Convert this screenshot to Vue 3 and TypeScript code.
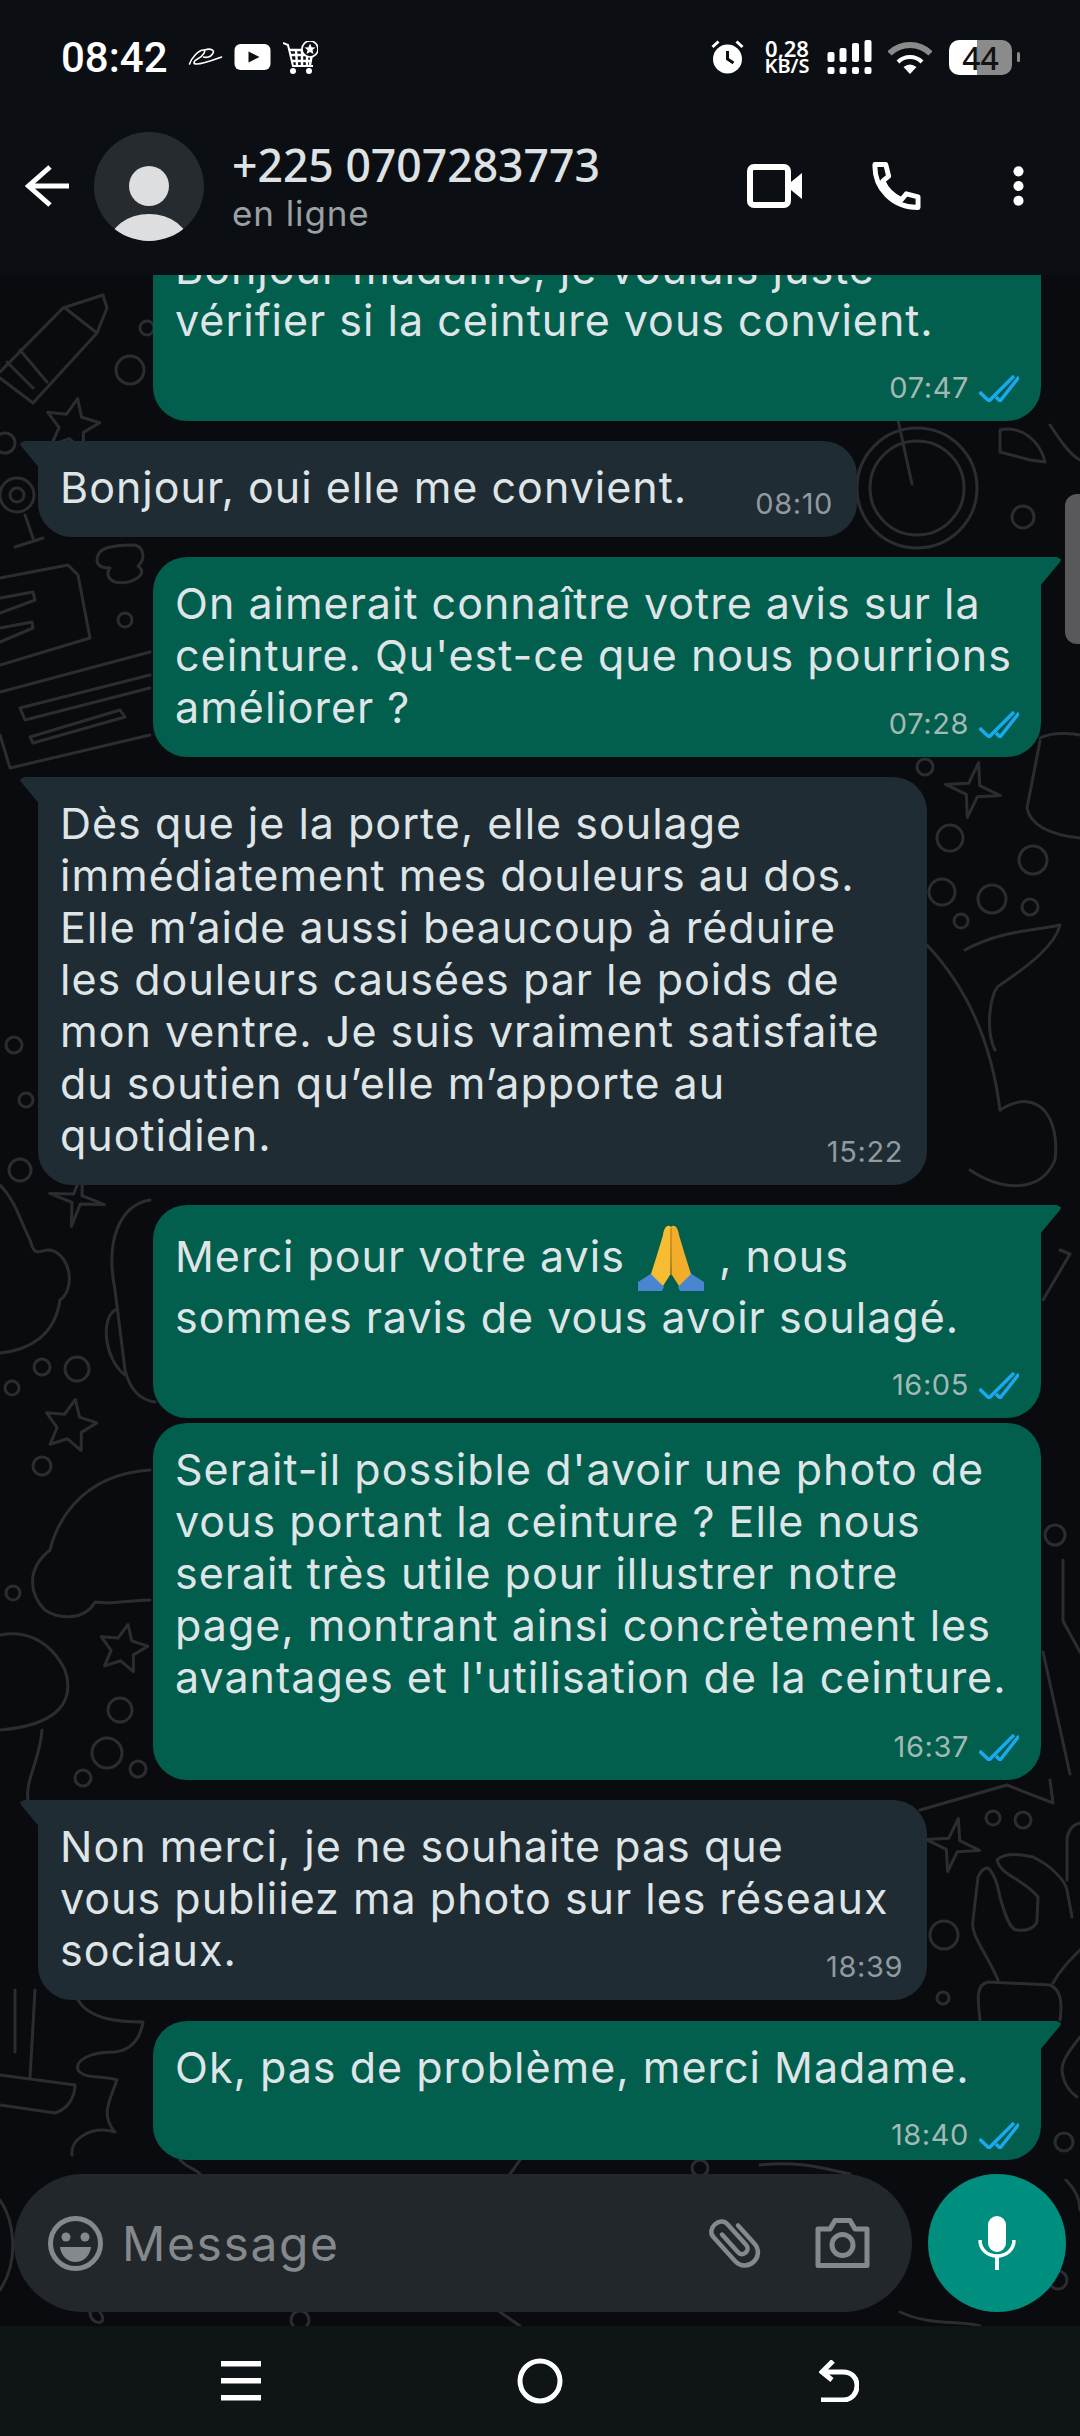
<script setup lang="ts">
interface Message {
  side: 'sent' | 'received'
  lines: string[]
  time: string
  footer?: boolean
  ticks?: boolean
  tail?: boolean
  short?: boolean
  clipped?: boolean
  close?: boolean
}

const messages: Message[] = [
  { side: 'sent', lines: ['Bonjour madame, je voulais juste', 'vérifier si la ceinture vous convient.'], time: '07:47', footer: true, ticks: true, tail: true },
  { side: 'received', lines: ['Bonjour, oui elle me convient.'], time: '08:10', tail: true, short: true },
  { side: 'sent', lines: ['On aimerait connaître votre avis sur la', "ceinture. Qu'est-ce que nous pourrions", 'améliorer ?'], time: '07:28', ticks: true, tail: true },
  { side: 'received', lines: ['Dès que je la porte, elle soulage', 'immédiatement mes douleurs au dos.', 'Elle m’aide aussi beaucoup à réduire', 'les douleurs causées par le poids de', 'mon ventre. Je suis vraiment satisfaite', 'du soutien qu’elle m’apporte au', 'quotidien.'], time: '15:22', tail: true },
  { side: 'sent', lines: ['Merci pour votre avis |, nous', 'sommes ravis de vous avoir soulagé.'], time: '16:05', footer: true, ticks: true, tail: true },
  { side: 'sent', lines: ["Serait-il possible d'avoir une photo de", 'vous portant la ceinture ? Elle nous', 'serait très utile pour illustrer notre', 'page, montrant ainsi concrètement les', "avantages et l'utilisation de la ceinture."], time: '16:37', footer: true, ticks: true, close: true },
  { side: 'received', lines: ['Non merci, je ne souhaite pas que', 'vous publiiez ma photo sur les réseaux', 'sociaux.'], time: '18:39', tail: true },
  { side: 'sent', lines: ['Ok, pas de problème, merci Madame.'], time: '18:40', footer: true, ticks: true, tail: true, clipped: true },
]

const rings: [number, number, number][] = [
  [130, 370, 14], [147, 328, 7], [125, 620, 7], [5, 443, 10], [17, 495, 17], [17, 495, 7],
  [917, 488, 60], [917, 488, 47], [1023, 517, 11], [950, 838, 13], [942, 892, 13], [992, 899, 14],
  [1033, 860, 14], [1030, 907, 8], [961, 921, 7], [925, 767, 8], [42, 1367, 8], [77, 1369, 12], [12, 1388, 7],
  [42, 1466, 9], [13, 1593, 7], [120, 1710, 12], [107, 1753, 15], [83, 1778, 8], [138, 1769, 8],
  [20, 1170, 11], [14, 1045, 8], [26, 1100, 7], [1055, 1535, 10],
  [993, 1818, 7], [1023, 1820, 8], [944, 1935, 14], [943, 1998, 6], [1064, 2142, 9], [700, 2168, 8], [300, 2320, 9], [1058, 2280, 9],
]

function star(cx: number, cy: number, r: number, inner: number, n: number): string {
  const pts: string[] = []
  for (let i = 0; i < n * 2; i++) {
    const rad = i % 2 === 0 ? r : inner
    const a = (Math.PI * i) / n - Math.PI / 2 + 0.2
    pts.push(`${(cx + rad * Math.cos(a)).toFixed(1)},${(cy + rad * Math.sin(a)).toFixed(1)}`)
  }
  return pts.join(' ')
}

const stars = [star(70, 1426, 27, 13, 5), star(123, 1649, 25, 12, 5), star(973, 790, 28, 8, 4), star(77, 1199, 28, 6, 4), star(72, 426, 28, 13, 5), star(953, 1845, 27, 8, 4)]

const doodles = [
  'M0 372 L63 308 L103 295 L107 308 L97 333 L33 403 L0 378 M65 308 L97 333 M7 362 L33 388 M20 350 L47 382',
  'M25 515 L33 538 M15 547 L43 538 M97 560 C97 548 110 545 135 545 C145 548 145 560 138 566 C150 575 130 585 115 582 C105 578 108 570 110 568 C100 568 97 565 97 560',
  'M0 578 L68 565 L78 575 L90 638 L0 665 M0 598 L33 592 L35 600 L0 613 M0 628 L32 622 L33 628 L0 642',
  'M0 692 L150 652 M0 735 L10 768 L150 735 M150 675 L20 708 L25 720 L150 688 M30 737 L120 710 L125 717 L33 743 L30 737',
  'M898 420 L912 484 M1000 430 C1020 425 1040 440 1045 462 L1030 460 L1000 452 Z M1050 425 C1060 440 1070 455 1080 460',
  'M1040 738 C1055 730 1080 735 1080 735 M1040 741 L1027 808 C1030 825 1050 835 1080 838',
  'M927 945 C960 980 990 1030 1000 1110 M965 950 C1000 930 1040 930 1060 925 C1055 945 1030 965 1000 985 C990 990 985 1030 995 1050',
  'M1000 1110 C1040 1085 1060 1120 1055 1160 C1040 1195 1000 1190 970 1170',
  'M0 1353 C30 1350 55 1335 60 1300 C75 1290 72 1255 50 1250 C38 1250 35 1258 30 1240 C20 1220 15 1200 0 1185',
  'M150 1200 C120 1205 105 1240 115 1290 L125 1370 C130 1390 140 1400 155 1402 M115 1310 C100 1320 105 1360 125 1375',
  'M150 1600 C130 1600 110 1605 95 1602 C85 1620 60 1620 45 1610 C30 1595 25 1570 50 1550 C55 1530 75 1475 150 1470',
  'M0 1635 C25 1630 50 1640 65 1670 C75 1700 60 1725 0 1730 M42 1730 C40 1760 25 1780 28 1800',
  'M15 1990 L15 2052 M35 1990 L30 2078 M0 2075 L75 2085 C75 2100 65 2110 55 2113 L0 2105',
  'M78 2000 C90 2020 120 2022 143 2022 C140 2040 130 2050 115 2052 C90 2052 75 2060 78 2070 C85 2080 105 2075 117 2080 C110 2100 100 2115 115 2132 C90 2125 70 2140 72 2155',
  'M1043 1300 L1070 1254 L1060 1250 M1043 1652 L1070 1774 M1063 1560 L1063 1621 L1080 1652',
  'M920 1810 L1007 1785 L1053 1803 L1050 1780',
  'M998 1980 C985 1950 970 1935 973 1920 L978 1877 C982 1868 988 1866 990 1870 C998 1880 998 1890 1000 1897 C1005 1915 1010 1930 1017 1930 C1030 1932 1037 1925 1037 1920 L1038 1897 C1025 1880 1000 1875 997 1860 C1005 1852 1020 1854 1033 1857 C1050 1865 1065 1880 1067 1890 L1072 1917',
  'M1053 1983 C1060 1970 1070 1960 1080 1950 M988 1982 C975 1985 978 2000 980 2020 M988 1982 L1050 1985 C1062 1990 1062 2005 1060 2020',
  'M1080 1823 C1070 1825 1067 1835 1067 1840 L1067 1880 M1080 2037 C1070 2050 1062 2060 1062 2070 C1063 2085 1070 2092 1077 2097',
  'M180 2160 C190 2170 195 2168 200 2174 M520 2160 L510 2174 M760 2165 C800 2160 830 2170 850 2174 M100 2312 C110 2326 90 2326 90 2312 M500 2312 L520 2326 M900 2312 C930 2326 960 2320 980 2326',
  'M0 2200 C14 2220 20 2260 0 2290 M1066 2180 C1076 2190 1080 2200 1080 2210',
]
</script>

<template>
  <div class="phone">
    <header class="top">
      <div class="status">
        <span class="clock">08:42</span>
        <svg class="ic-sig" width="35" height="20" viewBox="0 0 34 20" fill="none" stroke="#fff" stroke-width="1.6" stroke-linecap="round">
          <path d="M1 17 C3 11 10 3 15 3 C18 3 15 9 9 12 C5 14 4 17 8 17 C14 17 22 14 33 10" />
          <path d="M16 3 C22 1 27 3 24 7 C22 10 18 11 15 10" />
        </svg>
        <svg class="ic-yt" width="37" height="26" viewBox="0 0 36 26">
          <rect width="36" height="26" rx="6" fill="#fff" />
          <path d="M14 7.5 L25 13 L14 18.5 Z" fill="#0b0f13" />
        </svg>
        <svg class="ic-cart" width="35" height="33" viewBox="0 0 35 33" fill="none" stroke="#fff" stroke-width="2">
          <path d="M0 2 L5 4 L10 25 H30" />
          <path d="M6 9 H24 M7.5 14 H28 M9 20 H28 M13 9 L14 24 M19 9 V24 M24 12 V24 M29 13 L27 24" stroke-width="2.4" />
          <circle cx="10" cy="30" r="3" fill="#fff" stroke="none" />
          <circle cx="26" cy="30" r="3" fill="#fff" stroke="none" />
          <circle cx="27" cy="8" r="8" fill="#0b0f13" stroke="#fff" stroke-width="1.6" />
          <path d="M27 2.5 L28.6 6.2 L32.5 6.5 L29.5 9 L30.5 13 L27 11 L23.5 13 L24.5 9 L21.5 6.5 L25.4 6.2 Z" fill="#fff" stroke="none" />
        </svg>
        <div class="status-right">
          <svg width="33" height="34" viewBox="0 0 32 34" fill="none">
            <circle cx="16" cy="19" r="14.5" fill="#fff" />
            <path d="M16 11 V19 L22 23" stroke="#0b0f13" stroke-width="3" />
            <path d="M1 7 L7 1.5 M31 7 L25 1.5" stroke="#fff" stroke-width="3" />
          </svg>
          <div class="speed"><span>0,28</span><span>KB/S</span></div>
          <svg class="sig" width="45" height="34" viewBox="0 0 44 34" fill="#fff">
            <rect x="0" y="12" width="7" height="10" rx="2" /><rect x="12" y="8" width="7" height="14" rx="2" />
            <rect x="24.5" y="3" width="7" height="19" rx="2" /><rect x="37" y="0" width="7" height="22" rx="2" />
            <rect x="0" y="27" width="7" height="7" rx="2" /><rect x="12" y="27" width="7" height="7" rx="2" />
            <rect x="24.5" y="27" width="7" height="7" rx="2" /><rect x="37" y="27" width="7" height="7" rx="2" />
          </svg>
          <svg class="wifi" width="44" height="35" viewBox="0 0 43 35" fill="none">
            <path d="M1 13.5 A29 29 0 0 1 42 13.5" stroke="#8a8a8a" stroke-width="6" />
            <path d="M9.5 22 A17 17 0 0 1 33.5 22" stroke="#fff" stroke-width="4" />
            <path d="M15 27 Q21.5 22 28 27 L21.5 34 Z" fill="#fff" />
          </svg>
          <div class="battery-wrap">
            <div class="battery">44</div>
            <span class="battery-tip"></span>
          </div>
        </div>
      </div>
      <div class="appbar">
        <svg class="back" width="44" height="42" viewBox="0 0 44 42" fill="none" stroke="#fff" stroke-width="5">
          <path d="M44 21 H4 M25 2 L3.5 21 L25 40" />
        </svg>
        <svg class="avatar" width="110" height="109" viewBox="0 0 110 109">
          <defs><clipPath id="av"><ellipse cx="55" cy="54.5" rx="55" ry="54.5" /></clipPath></defs>
          <ellipse cx="55" cy="54.5" rx="55" ry="54.5" fill="#262b2f" />
          <g clip-path="url(#av)" fill="#dcdee0">
            <ellipse cx="55" cy="54" rx="20" ry="20" />
            <ellipse cx="55" cy="113" rx="40" ry="31" />
          </g>
        </svg>
        <div class="who">
          <div class="name">+225 0707283773</div>
          <div class="presence">en ligne</div>
        </div>
        <div class="actions">
          <svg width="55" height="44" viewBox="0 0 55 44" fill="none">
            <rect x="3" y="3" width="38" height="38" rx="4" stroke="#fff" stroke-width="6" />
            <path d="M44 18 L55 9 V35 L44 26 Z" fill="#fff" />
          </svg>
          <svg class="phone-ic" width="49" height="50" viewBox="0 0 50 50" fill="none" stroke="#fff" stroke-width="5" stroke-linejoin="round">
            <path d="M3 3 H14 L17 15 L11 20 C15 29 21 35 30 39 L35 33 L47 36 V47 C22 47 2 28 3 3 Z" />
          </svg>
          <svg class="more" width="11" height="44" viewBox="0 0 12 44" fill="#fff">
            <circle cx="6" cy="6" r="5.5" /><circle cx="6" cy="22" r="5.5" /><circle cx="6" cy="38" r="5.5" />
          </svg>
        </div>
      </div>
    </header>

    <main class="chat">
      <svg class="wall" viewBox="0 275 1080 2051" width="1080" height="2051" fill="none" stroke="#2c2d30" stroke-width="3" stroke-linecap="round" stroke-linejoin="round">
        <circle v-for="(c, i) in rings" :key="'r' + i" :cx="c[0]" :cy="c[1]" :r="c[2]" />
        <polygon v-for="(s, i) in stars" :key="'s' + i" :points="s" />
        <path v-for="(d, i) in doodles" :key="'d' + i" :d="d" />
      </svg>
      <span class="scroll-handle"></span>

      <div class="messages">
        <div
          v-for="(m, i) in messages"
          :key="i"
          class="row"
          :class="[m.side, { close: m.close, clipped: m.clipped }]"
        >
          <div class="bubble" :class="{ tail: m.tail, short: m.short }">
            <div class="text" :class="{ footer: m.footer }">
              <div v-for="(line, j) in m.lines" :key="j" class="line">
                <template v-if="line.includes('|')">
                  {{ line.split('|')[0] }}<svg class="pray" width="66" height="66" viewBox="0 0 66 66" role="img" aria-label="🙏">
                    <g>
                      <path d="M0 66 V57 L14 48 L26 62 L24 66 Z" fill="#4a86cf" />
                      <path d="M33 2 C30 -1 26 2 25 10 L19 30 L13 49 L25 61 L32 50 C33 35 33 12 33 2 Z" fill="#f6bd32" />
                    </g>
                    <g transform="translate(66 0) scale(-1 1)">
                      <path d="M0 66 V57 L14 48 L26 62 L24 66 Z" fill="#4a86cf" />
                      <path d="M33 2 C30 -1 26 2 25 10 L19 30 L13 49 L25 61 L32 50 C33 35 33 12 33 2 Z" fill="#f2ae2a" />
                    </g>
                    <path d="M33 3 V50" stroke="#c9851c" stroke-width="1.5" />
                  </svg> {{ line.split('|')[1] }}
                </template>
                <template v-else>{{ line }}</template>
              </div>
            </div>
            <div class="meta">
              <span class="time">{{ m.time }}</span>
              <svg v-if="m.ticks" class="ticks" width="40" height="27" viewBox="0 0 40 27" fill="none" stroke="#1aa9ee" stroke-width="3.5">
                <path d="M0.5 17 L10 26 L35 1" /><path d="M17 22 L21 26 L40 2" />
              </svg>
            </div>
          </div>
        </div>
      </div>

      <div class="composer">
        <div class="pill">
          <svg class="smile" width="55" height="55" viewBox="0 0 55 55" fill="none">
            <circle cx="27.5" cy="27.5" r="25" stroke="#85898c" stroke-width="5" />
            <circle cx="18" cy="21" r="4.5" fill="#85898c" /><circle cx="37" cy="21" r="4.5" fill="#85898c" />
            <path d="M12 31 H43 C42 40 35 46 27.5 46 C20 46 13 40 12 31 Z" fill="#85898c" />
          </svg>
          <span class="placeholder">Message</span>
          <svg class="clip" width="56" height="50" viewBox="0 0 56 50" fill="none" stroke="#85898c" stroke-width="4.5" stroke-linecap="round">
            <g transform="rotate(-42 28 25)">
              <path d="M24 10 V34 C24 41 35 41 35 34 V6 C35 -5 16 -5 16 6 V38 C16 56 42 56 42 38 V14" />
            </g>
          </svg>
          <svg class="camera" width="55" height="50" viewBox="0 0 55 50" fill="none">
            <path d="M3 11 H15 L20 2.5 H35 L40 11 H52 V47.5 H3 Z" stroke="#85898c" stroke-width="5" stroke-linejoin="round" />
            <circle cx="27.5" cy="27" r="10.5" stroke="#85898c" stroke-width="5" />
          </svg>
        </div>
        <div class="mic">
          <svg width="38" height="54" viewBox="0 0 38 54" fill="none">
            <rect x="10" y="0" width="18" height="36" rx="9" fill="#fff" />
            <path d="M2 24 C2 34 10 40 19 40 C28 40 36 34 36 24" stroke="#fff" stroke-width="3.5" />
            <path d="M19 40 V54" stroke="#fff" stroke-width="4" />
          </svg>
        </div>
      </div>
    </main>

    <nav class="navbar">
      <svg width="40" height="42" viewBox="0 0 40 42" fill="#fff">
        <rect y="1" width="40" height="5.5" /><rect y="18" width="40" height="5.5" /><rect y="35" width="40" height="5.5" />
      </svg>
      <svg width="46" height="46" viewBox="0 0 46 46" fill="none" stroke="#fff" stroke-width="5">
        <circle cx="23" cy="23" r="20" />
      </svg>
      <svg width="40" height="42" viewBox="0 0 40 42" fill="none" stroke="#fff" stroke-width="5">
        <path d="M2 40 H24 C33 40 38 33 38 26 C38 18 33 12 24 12 H4 M14 1 L3 12 L13 20" />
      </svg>
    </nav>
  </div>
</template>

<style scoped>
.phone, .phone * { box-sizing: border-box; }
.phone {
  width: 1080px;
  height: 2436px;
  display: flex;
  flex-direction: column;
  overflow: hidden;
  background: #0a0b0e;
  font-family: Inter, "DejaVu Sans", sans-serif;
}
.top {
  background: #0b0f13;
  color: #fff;
  flex: none;
}
.status {
  height: 114px;
  display: flex;
  align-items: center;
  padding: 0 60px 0 61px;
}
.clock {
  font-family: Roboto, "Noto Sans", sans-serif;
  font-size: 42px;
  font-weight: 500;
  width: 107px;
}
.ic-sig { margin-left: 20px; }
.ic-yt { margin-left: 11px; }
.ic-cart { margin-left: 12px; }
.status-right {
  margin-left: auto;
  display: flex;
  align-items: center;
}
.sig { margin-left: 16px; }
.wifi { margin-left: 16px; }
.speed {
  margin-left: 19px;
  display: flex;
  flex-direction: column;
  align-items: center;
  width: 48px;
  font-family: "Noto Sans", sans-serif;
  font-weight: 600;
  font-size: 20px;
  line-height: 18px;
}
.speed span:first-child { font-size: 22px; }
.battery-wrap {
  margin-left: 17px;
  display: flex;
  align-items: center;
  gap: 5px;
}
.battery {
  width: 63px;
  height: 35px;
  border-radius: 10px;
  background: linear-gradient(90deg, #fff 0 28px, #8b8b8b 28px);
  color: #101214;
  font-family: "Noto Sans", sans-serif;
  font-size: 32px;
  line-height: 35px;
  font-weight: 500;
  text-align: center;
}
.battery-tip {
  width: 3px;
  height: 10px;
  border-radius: 2px;
  background: #8b8b8b;
}
.appbar {
  height: 161px;
  display: flex;
  align-items: center;
  padding: 0 56px 17px 25px;
}
.avatar { margin-left: 25px; flex: none; }
.who { margin-left: 28px; padding-top: 2px; }
.name {
  font-family: "Noto Sans", sans-serif;
  font-size: 44.5px;
  font-weight: 500;
  line-height: 52px;
  color: #dfe2e5;
}
.presence {
  font-size: 35px;
  line-height: 44px;
  letter-spacing: 0.9px;
  color: #9ba0a3;
}
.actions {
  margin-left: auto;
  display: flex;
  align-items: center;
}
.phone-ic { margin-left: 70px; }
.more { margin-left: 92px; }

.chat {
  position: relative;
  flex: 1;
  min-height: 0;
  display: flex;
  flex-direction: column;
}
.wall {
  position: absolute;
  inset: 0;
}
.scroll-handle {
  position: absolute;
  top: 219px;
  right: 0;
  width: 15px;
  height: 150px;
  border-radius: 12px 0 0 12px;
  background: #59595b;
}
.messages {
  position: relative;
  flex: 1;
  min-height: 0;
  overflow: hidden;
  display: flex;
  flex-direction: column;
  justify-content: flex-end;
}
.row {
  flex: none;
  display: flex;
  margin-top: 20px;
}
.row.close { margin-top: 5px; }
.row.sent { justify-content: flex-end; padding-right: 39px; }
.row.received { padding-left: 38px; }
.row.clipped { height: 139px; margin-top: 21px; overflow: hidden; }

.bubble {
  position: relative;
  flex: none;
  display: grid;
  padding: 20px 22px 15px;
  border-radius: 34px;
  color: #dfe5e7;
  font-size: 43px;
  line-height: 52px;
}
.sent .bubble { width: 888px; background: #025e4d; }
.received .bubble { width: 889px; background: #202c33; }
.received .bubble.short { width: 819px; }
.sent .bubble.tail { border-top-right-radius: 0; }
.received .bubble.tail { border-top-left-radius: 0; }
.bubble.tail::before {
  content: "";
  position: absolute;
  top: 0;
  width: 21px;
  height: 29px;
  background: inherit;
}
.sent .bubble.tail::before {
  right: -20px;
  clip-path: polygon(0 0, 80% 0, 100% 8%, 96% 16%, 0 100%);
}
.received .bubble.tail::before {
  left: -18px;
  clip-path: polygon(100% 0, 20% 0, 0 8%, 4% 16%, 100% 100%);
}
.text, .meta { grid-area: 1 / 1; }
.text { margin-bottom: 9px; letter-spacing: 1px; }
.text.footer { margin-bottom: 60px; }
.row.close .text.footer { margin-bottom: 62px; }
.line { white-space: nowrap; }
.pray { vertical-align: -19px; margin: 0 2px 0 0; }
.meta {
  align-self: end;
  justify-self: end;
  display: flex;
  align-items: center;
  gap: 10px;
  height: 36px;
}
.received .meta { margin-right: 2px; }
.time {
  font-size: 29px;
  line-height: 36px;
  letter-spacing: 0.6px;
}
.sent .time { color: #a3b9b3; }
.received .time { color: #909a9f; }

.composer {
  position: relative;
  flex: none;
  display: flex;
  gap: 16px;
  padding: 14px;
}
.pill {
  flex: 1;
  height: 138px;
  border-radius: 69px;
  background: #22272b;
  display: flex;
  align-items: center;
  padding: 0 42px 0 34px;
}
.placeholder {
  margin-left: 19px;
  font-size: 48px;
  letter-spacing: 1.6px;
  color: #85898c;
}
.clip { margin-left: auto; }
.camera { margin-left: 52px; }
.mic {
  width: 138px;
  height: 138px;
  border-radius: 50%;
  background: #008f7f;
  display: flex;
  align-items: center;
  justify-content: center;
}
.navbar {
  flex: none;
  height: 110px;
  background: #0f1417;
  display: flex;
  align-items: center;
  justify-content: center;
  gap: 256px;
}
</style>
